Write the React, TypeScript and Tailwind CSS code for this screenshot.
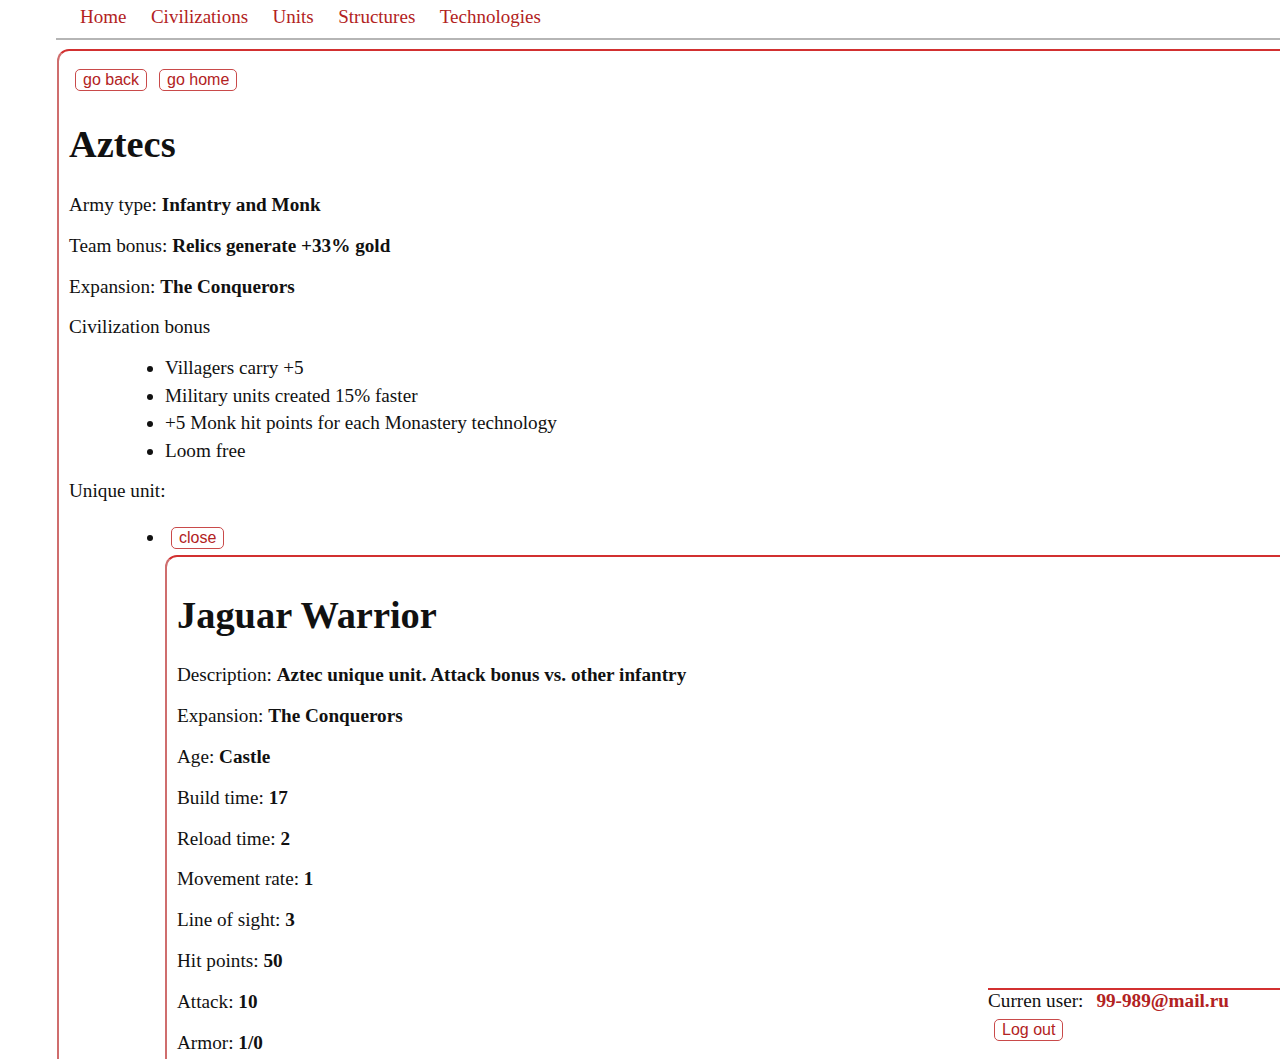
import React from "react";

const navLinks = ["Home", "Civilizations", "Units", "Structures", "Technologies"];

const civBonuses = [
  "Villagers carry +5",
  "Military units created 15% faster",
  "+5 Monk hit points for each Monastery technology",
  "Loom free",
];

const unitStats: [string, string][] = [
  ["Description", "Aztec unique unit. Attack bonus vs. other infantry"],
  ["Expansion", "The Conquerors"],
  ["Age", "Castle"],
  ["Build time", "17"],
  ["Reload time", "2"],
  ["Movement rate", "1"],
  ["Line of sight", "3"],
  ["Hit points", "50"],
  ["Attack", "10"],
  ["Armor", "1/0"],
];

function RedButton({ children, className = "" }: { children: React.ReactNode; className?: string }) {
  return (
    <button
      className={`h-[22px] rounded-[5px] border border-[#c94a4a] bg-white px-[7px] font-['Liberation_Sans',Arial,sans-serif] text-[16px] leading-[18px] text-[#b22222] ${className}`}
    >
      {children}
    </button>
  );
}

function Field({ label, value, first = false }: { label: string; value: string; first?: boolean }) {
  return (
    <p className={`leading-[22px] ${first ? "" : "mt-[18.8px]"}`}>
      {label}: <b>{value}</b>
    </p>
  );
}

export default function App() {
  return (
    <div className="min-h-screen overflow-x-hidden bg-white font-['Liberation_Serif','Times_New_Roman',serif] text-[19.2px] text-[#111]">
      <nav className="ml-[56px] flex h-[40px] items-start gap-[24.5px] border-b-2 border-[#b5b5b5] pl-[24px] pt-[6px] text-[19px] text-[#b22222]">
        {navLinks.map((link) => (
          <a key={link} href="#" className="leading-[22px]">
            {link}
          </a>
        ))}
      </nav>

      <section className="ml-[57px] mt-[9px] flex flex-col rounded-tl-[12px] border-l-2 border-t-2 border-l-[#cf6d6d] border-t-[#d23030] pb-[40px] pl-[10px] pt-[18px]">
        <div className="flex gap-[12px] pl-[6px]">
          <RedButton>go back</RedButton>
          <RedButton>go home</RedButton>
        </div>

        <h1 className="mt-[32px] text-[38.4px] font-bold leading-[42px]">Aztecs</h1>

        <div className="mt-[29px] flex flex-col">
          <Field first label="Army type" value="Infantry and Monk" />
          <Field label="Team bonus" value="Relics generate +33% gold" />
          <Field label="Expansion" value="The Conquerors" />
          <p className="mt-[18.8px] leading-[22px]">Civilization bonus</p>
        </div>

        <ul className="mt-[16px] list-disc pl-[96px]">
          {civBonuses.map((bonus) => (
            <li key={bonus} className="leading-[27.5px]">
              {bonus}
            </li>
          ))}
        </ul>

        <p className="mt-[16px] leading-[22px]">Unique unit:</p>

        <ul className="mt-[24px] list-disc pl-[96px]">
          <li className="leading-[22px]">
            <RedButton className="ml-[6px]">close</RedButton>
            <div className="mt-[6px] flex flex-col rounded-tl-[12px] border-l-2 border-t-2 border-l-[#cf6d6d] border-t-[#d23030] pb-[20px] pl-[10px]">
              <h2 className="mt-[36px] text-[38.4px] font-bold leading-[44px]">Jaguar Warrior</h2>
              <div className="mt-[27px] flex flex-col">
                {unitStats.map(([label, value], i) => (
                  <Field key={label} first={i === 0} label={label} value={value} />
                ))}
              </div>
            </div>
          </li>
        </ul>
      </section>

      <footer className="fixed left-[988px] right-0 top-[988px] border-t-2 border-[#d23030] bg-white pb-[19px]">
        <div className="flex leading-[22px]">
          <span>Curren user:</span>
          <b className="ml-[13px] text-[#b22222]">99-989@mail.ru</b>
        </div>
        <RedButton className="ml-[6px] mt-[7px]">Log out</RedButton>
      </footer>
    </div>
  );
}
